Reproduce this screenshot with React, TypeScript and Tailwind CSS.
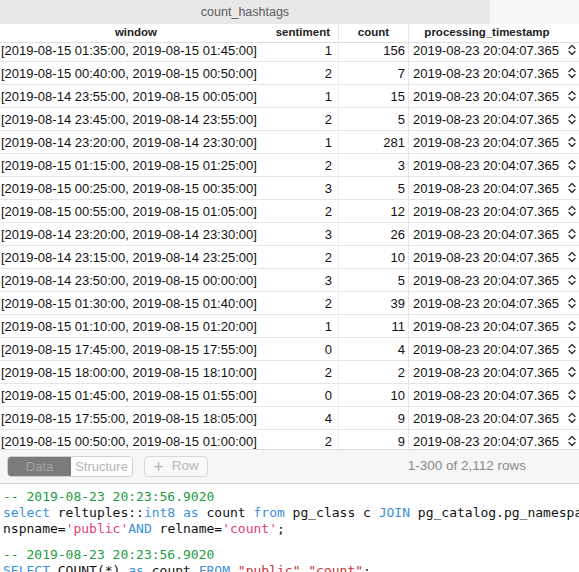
import React from "react";

const rows: [string, number, number][] = [
  ["[2019-08-15 01:35:00, 2019-08-15 01:45:00]", 1, 156],
  ["[2019-08-15 00:40:00, 2019-08-15 00:50:00]", 2, 7],
  ["[2019-08-14 23:55:00, 2019-08-15 00:05:00]", 1, 15],
  ["[2019-08-14 23:45:00, 2019-08-14 23:55:00]", 2, 5],
  ["[2019-08-14 23:20:00, 2019-08-14 23:30:00]", 1, 281],
  ["[2019-08-15 01:15:00, 2019-08-15 01:25:00]", 2, 3],
  ["[2019-08-15 00:25:00, 2019-08-15 00:35:00]", 3, 5],
  ["[2019-08-15 00:55:00, 2019-08-15 01:05:00]", 2, 12],
  ["[2019-08-14 23:20:00, 2019-08-14 23:30:00]", 3, 26],
  ["[2019-08-14 23:15:00, 2019-08-14 23:25:00]", 2, 10],
  ["[2019-08-14 23:50:00, 2019-08-15 00:00:00]", 3, 5],
  ["[2019-08-15 01:30:00, 2019-08-15 01:40:00]", 2, 39],
  ["[2019-08-15 01:10:00, 2019-08-15 01:20:00]", 1, 11],
  ["[2019-08-15 17:45:00, 2019-08-15 17:55:00]", 0, 4],
  ["[2019-08-15 18:00:00, 2019-08-15 18:10:00]", 2, 2],
  ["[2019-08-15 01:45:00, 2019-08-15 01:55:00]", 0, 10],
  ["[2019-08-15 17:55:00, 2019-08-15 18:05:00]", 4, 9],
  ["[2019-08-15 00:50:00, 2019-08-15 01:00:00]", 2, 9],
];

function Stepper() {
  return (
    <svg width="10" height="14" viewBox="0 0 10 14" fill="none" stroke="#333" strokeWidth="1.4" strokeLinecap="round" strokeLinejoin="round">
      <path d="M2 5.5 L5 2.5 L8 5.5" />
      <path d="M2 8.5 L5 11.5 L8 8.5" />
    </svg>
  );
}

const kw = "text-[#3d8fd8]";
const cm = "text-[#1f9b3f]";
const st = "text-[#e0426f]";
const id = "text-[#c8322f]";

export default function App() {
  return (
    <div className="w-[579px] h-[572px] overflow-hidden bg-white flex flex-col" style={{ fontFamily: '"Liberation Sans", Arial, sans-serif' }}>
      {/* title bar */}
      <div className="flex h-[24px] shrink-0">
        <div className="w-[490px] bg-[#e8e8e8] flex items-center justify-center text-[12.5px] text-[#5c5c5c]">count_hashtags</div>
        <div className="flex-1 bg-[#f6f6f6]" />
      </div>

      {/* header */}
      <div className="flex h-[19px] shrink-0 bg-white border-b border-[#dedede] text-[11.5px] font-bold text-[#222] leading-none">
        <div className="w-[272px] flex items-center justify-center">window</div>
        <div className="w-[67px] flex items-center justify-end pr-[8px] border-r border-[#e6e6e6]">sentiment</div>
        <div className="w-[70px] flex items-center justify-center border-r border-[#e6e6e6]">count</div>
        <div className="w-[156px] flex items-center justify-center">processing_timestamp</div>
        <div className="flex-1" />
      </div>

      {/* body */}
      <div className="h-[406px] shrink-0 overflow-hidden">
        <div className="-mt-[4px]">
          {rows.map(([w, s, c], i) => (
            <div key={i} className="flex h-[23px] border-b border-[#e6e6e6] text-[13px] text-[#111] leading-none">
              <div className="w-[272px] flex items-center pl-[1px] whitespace-nowrap overflow-hidden">{w}</div>
              <div className="w-[67px] flex items-center justify-end pr-[6px] border-r border-[#f0f0f0]">{s}</div>
              <div className="w-[70px] flex items-center justify-end pr-[3px] border-r border-[#e6e6e6]">{c}</div>
              <div className="w-[156px] flex items-center pl-[4px] whitespace-nowrap overflow-hidden">2019-08-23 20:04:07.365</div>
              <div className="flex-1 flex items-center justify-end pr-[2px]">
                <Stepper />
              </div>
            </div>
          ))}
        </div>
      </div>

      {/* toolbar */}
      <div className="h-[35px] shrink-0 bg-[#f6f6f6] border-t border-[#dcdcdc] border-b border-b-[#d2d2d2] flex items-center pl-[7px] text-[13px]">
        <div className="flex h-[21px] rounded-[4px] overflow-hidden border border-[#cfcfcf]">
          <div className="w-[63px] bg-[#7b7b7b] text-[#a3a3a3] flex items-center justify-center">Data</div>
          <div className="w-[61px] bg-white text-[#b5b5b5] flex items-center justify-center">Structure</div>
        </div>
        <div className="ml-[11px] w-[64px] h-[21px] rounded-[4px] border border-[#d8d8d8] bg-[#f9f9f9] text-[#b8b8b8] flex items-center justify-center gap-[8px] text-[13.5px]">
          <span className="text-[18px] leading-none font-light">+</span>
          <span>Row</span>
        </div>
        <div className="ml-auto mr-[53px] text-[#8a8a8a] text-[13.5px]">1-300 of 2,112 rows</div>
      </div>

      {/* editor */}
      <div className="flex-1 bg-white pt-[5px] pl-[3px] text-[13px] leading-[16px] text-[#111] overflow-hidden" style={{ fontFamily: '"DejaVu Sans Mono", "Liberation Mono", monospace' }}>
        <div className={cm + " whitespace-pre"}>-- 2019-08-23 20:23:56.9020</div>
        <div className="w-[576px] overflow-hidden whitespace-pre">
          <span className={kw}>select</span> reltuples::<span className={kw}>int8</span> <span className={kw}>as</span> count <span className={kw}>from</span> pg_class c <span className={kw}>JOIN</span> pg_catalog.pg_namespa
        </div>
        <div className="whitespace-pre">
          nspname=<span className={st}>'public'</span><span className={kw}>AND</span> relname=<span className={st}>'count'</span>;
        </div>
        <div className="h-[10px]" />
        <div className={cm + " whitespace-pre"}>-- 2019-08-23 20:23:56.9020</div>
        <div className="whitespace-pre">
          <span className={kw}>SELECT</span> COUNT(*) <span className={kw}>as</span> count <span className={kw}>FROM</span> <span className={id}>"public"</span>.<span className={id}>"count"</span>;
        </div>
      </div>
    </div>
  );
}
